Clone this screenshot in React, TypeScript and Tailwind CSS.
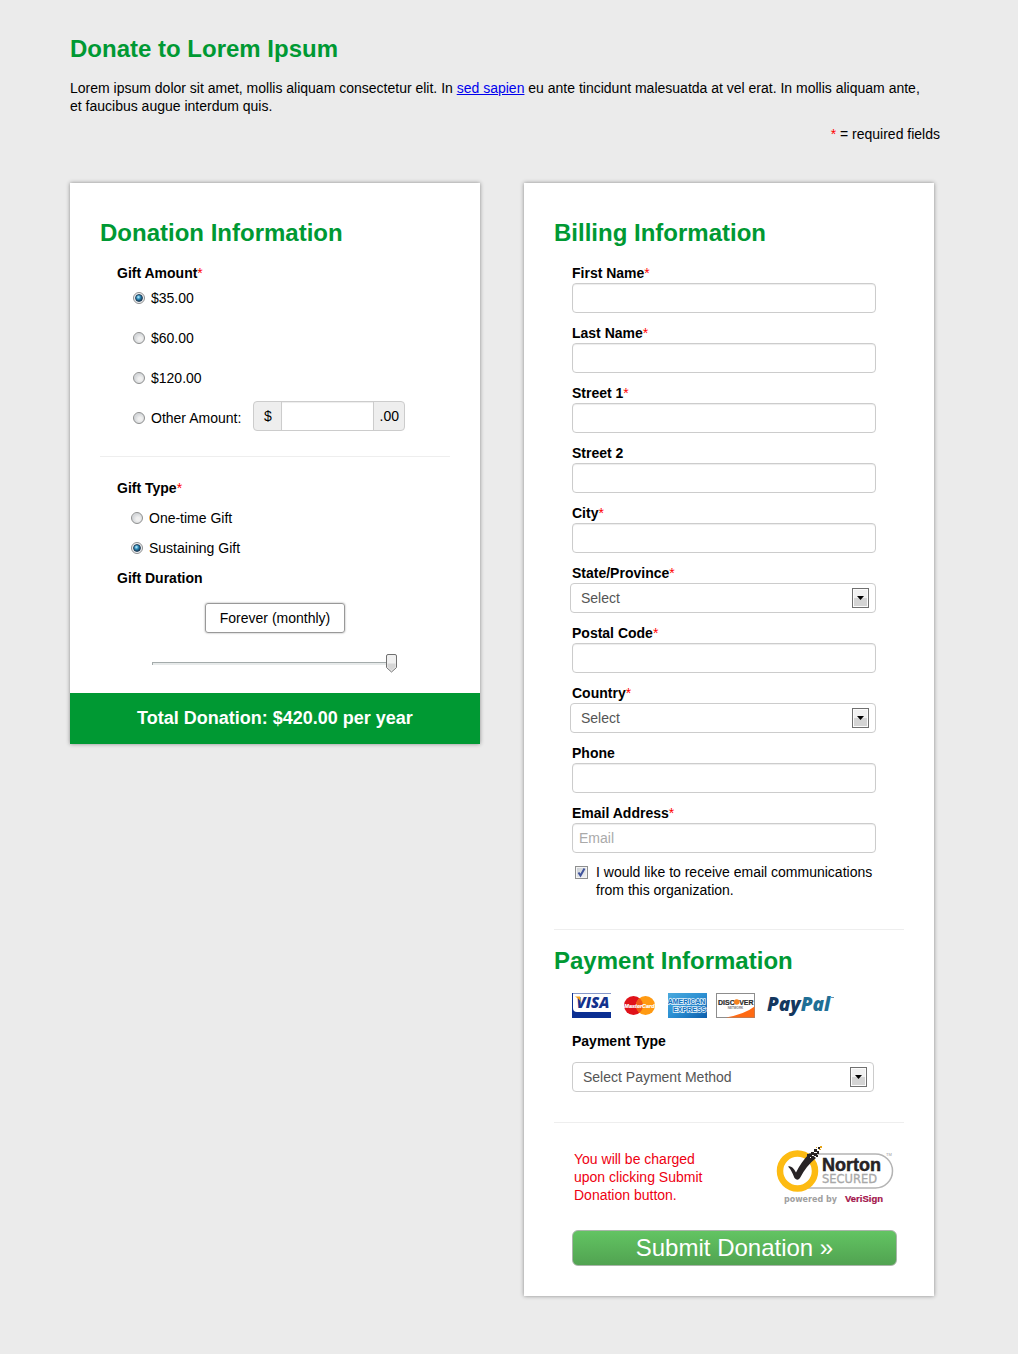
import { useState, type ReactNode } from "react";

const heading = "text-2xl leading-[30px] font-bold text-[#009933]";
const textInput =
  "block h-[30px] w-full rounded border border-[#cccccc] bg-white px-1.5 text-black placeholder:text-[#aaaaaa] shadow-[inset_0_1px_1px_rgba(0,0,0,0.075)]";

function Star() {
  return <span className="font-normal text-[#ff0000]">*</span>;
}

function Radio({ name, label, checked, onPick }: { name: string; label: string; checked: boolean; onPick: () => void }) {
  return (
    <label className="flex h-[30px] items-center gap-1.5">
      <span className="grid size-3 place-items-center">
        <input
          type="radio"
          name={name}
          checked={checked}
          onChange={onPick}
          className="peer col-start-1 row-start-1 size-3 appearance-none rounded-full border border-[#8e8f8f] bg-[radial-gradient(circle_at_60%_60%,#f0f0f0_20%,#d2d5d8_65%,#f4f4f4_80%)] checked:bg-none checked:bg-[#f0f2f4]"
        />
        <span className="pointer-events-none col-start-1 row-start-1 hidden size-2 rounded-full border border-[#243f58] bg-[radial-gradient(circle_at_40%_35%,#9fe0f8_8%,#2b86b5_40%,#0f3450_85%)] peer-checked:block" />
      </span>
      {label}
    </label>
  );
}

function Field({ id, label, required, placeholder }: { id: string; label: string; required?: boolean; placeholder?: string }) {
  return (
    <div>
      <label htmlFor={id} className="block leading-5 font-bold">
        {label}
        {required && <Star />}
      </label>
      <input id={id} type="text" placeholder={placeholder} className={textInput} />
    </div>
  );
}

function Drop({ id, children }: { id: string; children: ReactNode }) {
  return (
    <div className="relative">
      <select
        id={id}
        className="block h-[30px] w-full appearance-none rounded border border-[#cccccc] bg-white pr-8 pl-2.5 text-[#555555]"
      >
        {children}
      </select>
      <span className="pointer-events-none absolute top-[5px] right-[7px] grid h-5 w-[17px] place-items-center border border-[#707070] bg-linear-to-b from-[#f1f1f1] from-50% to-[#d4d4d4] to-50% shadow-[inset_0_0_0_1px_#fcfcfc]">
        <svg width="7" height="4" viewBox="0 0 7 4" aria-hidden="true">
          <path d="M0 0H7L3.5 4Z" fill="#000" />
        </svg>
      </span>
    </div>
  );
}

function DropField({ id, label }: { id: string; label: string }) {
  return (
    <div>
      <label htmlFor={id} className="block leading-5 font-bold">
        {label}
        <Star />
      </label>
      <div className="-ml-0.5">
        <Drop id={id}>
          <option>Select</option>
        </Drop>
      </div>
    </div>
  );
}

function Visa() {
  return (
    <svg width="39" height="25" viewBox="0 0 39 25" role="img" aria-label="Visa">
      <rect width="39" height="25" fill="#0b2f92" />
      <path d="M1 0.5H39V19H5Q1 19 1 15Z" fill="#fff" />
      <text x="4.5" y="15" fontFamily="Open Sans, sans-serif" fontWeight="800" fontStyle="italic" fontSize="15" fill="#12318c">
        VISA
      </text>
      <path d="M3 3.5H8L9 9Q7 5.500 3 3.500Z" fill="#f4a11d" />
    </svg>
  );
}

function MasterCard() {
  return (
    <svg width="32" height="20" viewBox="0 0 32 20" role="img" aria-label="MasterCard">
      <circle cx="9.5" cy="9.500" r="9.500" fill="#e0121a" />
      <circle cx="21.5" cy="9.500" r="9.500" fill="#ff9a12" />
      <path d="M15.500 2.200A9.500 9.500 0 0 1 15.500 16.800A9.500 9.500 0 0 1 15.500 2.200Z" fill="#ef5a16" />
      <text x="15.5" y="11.5" textAnchor="middle" fontFamily="Liberation Sans, sans-serif" fontWeight="700" fontStyle="italic" fontSize="5.5" fill="#fff" stroke="#fff" strokeWidth="0.200">
        MasterCard
      </text>
    </svg>
  );
}

function Amex() {
  return (
    <svg width="39" height="25" viewBox="0 0 39 25" role="img" aria-label="American Express">
      <defs>
        <linearGradient id="amex" x1="0" y1="0" x2="1" y2="1">
          <stop offset="0" stopColor="#4aa9dd" />
          <stop offset="0.5" stopColor="#2b8fd2" />
          <stop offset="1" stopColor="#0b5cab" />
        </linearGradient>
      </defs>
      <rect width="39" height="25" fill="url(#amex)" />
      <g fontFamily="Liberation Sans, sans-serif" fontWeight="700" fontSize="7" fill="#1170bd" stroke="#e3f3fc" strokeWidth="1.5" paintOrder="stroke">
        <text x="18.5" y="11.3" textAnchor="middle">AMERICAN</text>
        <text x="38" y="19" textAnchor="end">EXPRESS</text>
      </g>
    </svg>
  );
}

function Discover() {
  return (
    <svg width="39" height="25" viewBox="0 0 39 25" role="img" aria-label="Discover Network">
      <rect x="0.5" y="0.5" width="38" height="24" fill="#fff" stroke="#8d8d8d" />
      <path d="M38.5 13.5Q29 21 10 24.5H38.5Z" fill="#ff6a13" />
      <g fontFamily="Liberation Sans, sans-serif" fontWeight="700" fill="#2b2b2b">
        <text x="2" y="11.5" fontSize="7" stroke="#2b2b2b" strokeWidth="0.200">DISC</text>
        <text x="23.2" y="11.5" fontSize="7" stroke="#2b2b2b" strokeWidth="0.200">VER</text>
        <text x="19.5" y="16" fontSize="3" textAnchor="middle" fill="#777">NETWORK</text>
      </g>
      <circle cx="20.7" cy="9" r="2.8" fill="#f5821f" />
    </svg>
  );
}

function PayPal() {
  return (
    <svg width="72" height="25" viewBox="0 0 72 25" role="img" aria-label="PayPal">
      <g fontFamily="Open Sans, sans-serif" fontWeight="800" fontStyle="italic" fontSize="19">
        <text x="0" y="18" fill="#14375f">
          Pay<tspan fill="#1f6f96">Pal</tspan>
        </text>
      </g>
      <path d="M64 4.500H67" stroke="#6b93ab" strokeWidth="1" />
    </svg>
  );
}

function Norton() {
  return (
    <svg width="120" height="62" viewBox="0 0 120 62" role="img" aria-label="Norton Secured, powered by VeriSign" className="shrink-0">
      <path d="M22 9H99.500A17 17 0 0 1 99.500 43H22" fill="#fff" stroke="#b4b4b4" strokeWidth="1.500" />
      <circle cx="21.5" cy="26" r="17.500" fill="#fff" stroke="#fdbb12" strokeWidth="6.500" />
      <path d="M12 21.500Q16 20 20 27.500Q25 17 34 8L40 13Q30 21 24 33Q21.500 36.500 18.500 33Q15.500 25 12 21.500Z" fill="#272325" />
      <g fill="#272325">
        <path d="M35 7h3v3h-3zM38 4h3v3h-3zM41 6h2v3h-2zM38 8h3v3h-3zM42 2h2v2h-2zM31 9h3v3h-3zM40 10h2v2h-2z" />
      </g>
      <path d="M44 1h2v2h-2zM43 4h2v1h-2zM40 2h1v1h-1z" fill="#e5a51b" />
      <path d="M36 10h1v1h-1zM39 7h1v1h-1zM34 12h1v1h-1z" fill="#fff" />
      <g fontFamily="Liberation Sans, sans-serif">
        <text x="46" y="26" fontWeight="700" fontSize="18" fill="#272325" stroke="#272325" strokeWidth="0.500">Norton</text>
        <text x="46" y="38" fontFamily="DejaVu Sans, sans-serif" fontSize="11.500" fill="#a8a8a8" stroke="#a8a8a8" strokeWidth="0.300">SECURED</text>
        <text x="110" y="11" fontSize="4" fill="#999">TM</text>
      </g>
      <text x="8" y="57" fontFamily="DejaVu Sans, sans-serif" fontWeight="700" fontSize="8" fill="#a0a0a0">powered by</text>
      <text x="69" y="57" fontFamily="Liberation Sans, sans-serif" fontWeight="700" fontSize="9.500" fill="#a3124a" stroke="#a3124a" strokeWidth="0.200">VeriSign</text>
    </svg>
  );
}

export default function App() {
  const [amount, setAmount] = useState("$35.00");
  const [kind, setKind] = useState("Sustaining Gift");
  const [months, setMonths] = useState(100);

  return (
    <main className="min-h-screen bg-[#ebebeb] pt-[34px] pr-[78px] pb-[57px] pl-[70px] font-['Liberation_Sans',Arial,sans-serif] text-sm leading-[18px] text-black">
      <h1 className={heading}>Donate to Lorem Ipsum</h1>
      <p className="mt-[15px] mr-1.5">
        Lorem ipsum dolor sit amet, mollis aliquam consectetur elit. In{" "}
        <a href="#" className="text-[#0000ee] underline">sed sapien</a> eu ante tincidunt malesuatda at vel erat. In mollis aliquam ante, et faucibus augue interdum quis.
      </p>
      <p className="mt-2.5 text-right">
        <Star /> = required fields
      </p>

      <form className="mt-10 mr-1.5 grid grid-cols-2 items-start gap-11" onSubmit={(e) => e.preventDefault()}>
        <section className="bg-white shadow-[0_0_4px_#888888]">
          <div className="px-[30px] pt-[35px]">
            <h2 className={heading}>Donation Information</h2>
            <fieldset className="mt-[15px] pl-[17px]">
              <legend className="leading-5 font-bold">
                Gift Amount
                <Star />
              </legend>
              <div className="flex flex-col gap-2.5 pl-4">
                {["$35.00", "$60.00", "$120.00"].map((a) => (
                  <Radio key={a} name="amount" label={a} checked={amount === a} onPick={() => setAmount(a)} />
                ))}
                <div className="flex h-[30px] items-center gap-3">
                  <Radio name="amount" label="Other Amount:" checked={amount === "other"} onPick={() => setAmount("other")} />
                  <div className="mb-1 flex h-[30px] w-[152px] overflow-hidden rounded border border-[#cccccc] bg-[#eeeeee] leading-7">
                    <span className="w-[27px] text-center">$</span>
                    <input
                      type="text"
                      aria-label="Other amount in dollars"
                      className="min-w-0 flex-1 border-x border-[#cccccc] bg-white px-1.5 shadow-[inset_0_1px_1px_rgba(0,0,0,0.075)]"
                    />
                    <span className="w-[30px] text-center">.00</span>
                  </div>
                </div>
              </div>
            </fieldset>
            <hr className="mt-[23px] border-[#eeeeee]" />
            <fieldset className="mt-4 pl-[17px]">
              <legend className="leading-[30px] font-bold">
                Gift Type
                <Star />
              </legend>
              <div className="pl-3.5">
                {["One-time Gift", "Sustaining Gift"].map((k) => (
                  <Radio key={k} name="kind" label={k} checked={kind === k} onPick={() => setKind(k)} />
                ))}
              </div>
              <label htmlFor="duration" className="block leading-[30px] font-bold">
                Gift Duration
              </label>
            </fieldset>
            <div className="mt-2.5 flex justify-center">
              <output htmlFor="duration" className="rounded-[3px] border border-[#999999] px-3.5 py-[5px] shadow-[0_0_2px_#999999]">
                Forever (monthly)
              </output>
            </div>
            <div className="relative mt-5 mr-[59px] mb-5 ml-[52px] h-5">
              <input
                id="duration"
                type="range"
                min={0}
                max={100}
                value={months}
                onChange={(e) => setMonths(Number(e.target.value))}
                className="block h-5 w-full appearance-none bg-transparent [&::-webkit-slider-runnable-track]:h-[3px] [&::-webkit-slider-runnable-track]:border-t [&::-webkit-slider-runnable-track]:border-l [&::-webkit-slider-runnable-track]:border-[#a4abab] [&::-webkit-slider-runnable-track]:bg-[#e7eaea] [&::-webkit-slider-thumb]:size-0 [&::-webkit-slider-thumb]:appearance-none"
              />
              <svg
                width="11"
                height="19"
                viewBox="0 0 11 19"
                aria-hidden="true"
                className="pointer-events-none absolute top-px -ml-[5px]"
                style={{ left: `${months}%` }}
              >
                <path d="M2 0.500H9Q10.500 0.500 10.500 2V13.500L5.500 18L0.500 13.500V2Q0.500 0.500 2 0.500Z" fill="#f0f0f0" stroke="#707070" />
                <path d="M1.500 9.500H9.500V13L5.500 16.500L1.500 13Z" fill="#d6d6d6" />
              </svg>
            </div>
          </div>
          <p className="bg-[#009933] py-4 text-center text-lg leading-[19px] font-bold text-white">Total Donation: $420.00 per year</p>
        </section>

        <section className="bg-white px-[30px] pt-[35px] pb-[30px] shadow-[0_0_4px_#888888]">
          <h2 className={heading}>Billing Information</h2>
          <div className="mt-[15px] flex flex-col gap-2.5 pr-7 pl-[18px]">
            <Field id="first" label="First Name" required />
            <Field id="last" label="Last Name" required />
            <Field id="street1" label="Street 1" required />
            <Field id="street2" label="Street 2" />
            <Field id="city" label="City" required />
            <DropField id="state" label="State/Province" />
            <Field id="postal" label="Postal Code" required />
            <DropField id="country" label="Country" />
            <Field id="phone" label="Phone" />
            <Field id="email" label="Email Address" required placeholder="Email" />
            <label className="flex items-start gap-2 pl-[3px]">
              <span className="mt-[3px] grid shrink-0 place-items-center">
                <input
                  type="checkbox"
                  defaultChecked
                  className="peer col-start-1 row-start-1 size-[13px] appearance-none border border-[#8e8f8f] bg-linear-to-br from-[#c8cdd3] to-[#f6f6f6] shadow-[inset_0_0_0_1px_#f4f4f4]"
                />
                <svg width="11" height="11" viewBox="0 0 11 11" aria-hidden="true" className="pointer-events-none invisible col-start-1 row-start-1 peer-checked:visible">
                  <path d="M2.500 5.500L4.500 8.500L8.500 1.500" fill="none" stroke="#41549c" strokeWidth="2" />
                </svg>
              </span>
              <span>I would like to receive email communications from this organization.</span>
            </label>
          </div>
          <hr className="mt-[30px] border-[#eeeeee]" />

          <h2 className={`mt-4 ${heading}`}>Payment Information</h2>
          <div className="mt-[17px] flex items-center pl-[18px]">
            <Visa />
            <div className="mr-3 ml-[13px]">
              <MasterCard />
            </div>
            <Amex />
            <div className="mr-3 ml-[9px]">
              <Discover />
            </div>
            <PayPal />
          </div>
          <div className="mt-[13px] pr-[30px] pl-[18px]">
            <label htmlFor="payment" className="mb-[11px] block leading-5 font-bold">
              Payment Type
            </label>
            <Drop id="payment">
              <option>Select Payment Method</option>
            </Drop>
          </div>
          <hr className="mt-[30px] border-[#eeeeee]" />

          <div className="mt-[22px] flex items-start justify-between gap-4 pr-2 pl-5">
            <p className="mt-[5px] w-[134px] text-[#ee0011]">You will be charged upon clicking Submit Donation button.</p>
            <Norton />
          </div>
          <div className="mt-[23px] pr-[7px] pl-[18px]">
            <button
              type="submit"
              className="block h-9 w-full rounded-md border border-[#a9b5a9] bg-linear-to-b from-[#62c462] to-[#51a351] text-2xl leading-8 text-white"
            >
              Submit Donation »
            </button>
          </div>
        </section>
      </form>
    </main>
  );
}
